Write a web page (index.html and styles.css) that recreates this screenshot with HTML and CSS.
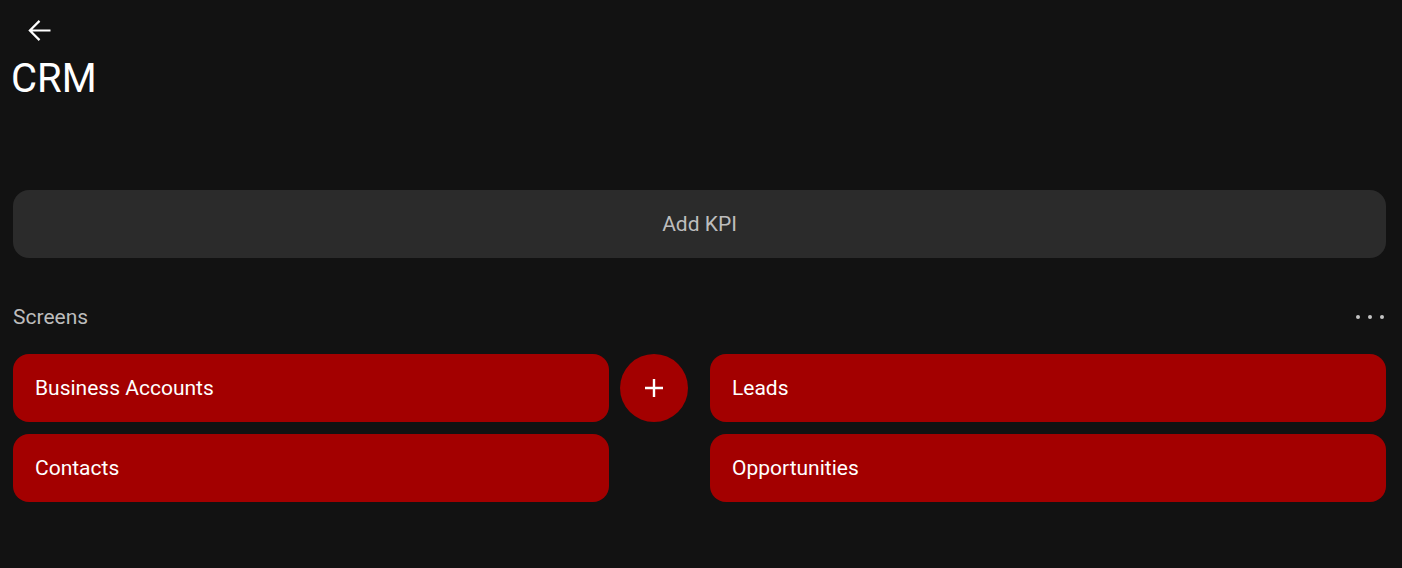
FILE: index.html
```html
<!DOCTYPE html>
<html lang="en">
<head>
    <meta charset="UTF-8">
    <meta name="viewport" content="width=device-width, initial-scale=1.0">
    <title>CRM</title>
    <link rel="stylesheet" href="styles.css">
</head>
<body>

    <div class="page">
        <!-- Header -->
        <div class="header">
            <button class="back-btn" aria-label="Back">
                <svg width="33" height="33" viewBox="0 0 24 24">
                    <path d="M20 12H5M12 5l-7 7 7 7" stroke="#ffffff" stroke-width="1.6" fill="none"/>
                </svg>
            </button>
            <h1>CRM</h1>
        </div>

        <!-- KPI -->
        <button class="kpi-btn">Add KPI</button>

        <!-- Screens -->
        <div class="section-header">
            <span>Screens</span>
            <span class="dots"><i></i><i></i><i></i></span>
        </div>

        <div class="screens-grid">
            <div class="screen-card">Business Accounts</div>
            <div class="add-cell"><button class="add-btn" aria-label="Add screen">
                <svg width="24" height="24" viewBox="0 0 24 24">
                    <path d="M12 3v18M3 12h18" stroke="#ffffff" stroke-width="2.4" fill="none"/>
                </svg>
            </button></div>
            <div class="screen-card">Leads</div>
            <div class="screen-card">Contacts</div>
            <div></div>
            <div class="screen-card">Opportunities</div>
        </div>
    </div>

</body>
</html>
```

FILE: styles.css
```css
body {
    font-family: Roboto, "Noto Sans", sans-serif;
    margin: 0;
    background-color: #121212;
    color: #fff;
}
.page {
    padding: 14px 16px 0 13px;
}
.header {
    height: 176px;
}
.back-btn {
    background: none;
    border: none;
    padding: 0;
    margin-left: 10px;
    width: 33px;
    height: 33px;
    cursor: pointer;
}
.back-btn svg {
    display: block;
}
.header h1 {
    margin: 4px 0 0 -2px;
    font-size: 40px;
    font-weight: 400;
    line-height: 48px;
}
.kpi-btn {
    display: block;
    width: 100%;
    height: 68px;
    border: none;
    border-radius: 16px;
    background-color: #2b2b2b;
    color: #bdbdbd;
    font-family: inherit;
    font-size: 21px;
    cursor: pointer;
}
.section-header {
    display: flex;
    justify-content: space-between;
    align-items: center;
    margin-top: 46px;
    height: 26px;
    color: #bdbdbd;
    font-size: 21px;
}
.dots {
    display: flex;
    gap: 8px;
    padding-right: 2px;
}
.dots i {
    width: 4px;
    height: 4px;
    border-radius: 50%;
    background-color: #c4c4c4;
}
.screens-grid {
    display: grid;
    grid-template-columns: 596px 79px 1fr;
    grid-auto-rows: 68px;
    column-gap: 11px;
    row-gap: 12px;
    margin-top: 24px;
}
.screen-card {
    background-color: #a30000;
    border-radius: 16px;
    display: flex;
    align-items: center;
    padding-left: 22px;
    font-size: 21px;
    color: #fff;
    cursor: pointer;
}
.add-btn {
    width: 68px;
    height: 68px;
    border-radius: 50%;
    border: none;
    background-color: #a30000;
    display: flex;
    align-items: center;
    justify-content: center;
    padding: 0;
    cursor: pointer;
}
```
